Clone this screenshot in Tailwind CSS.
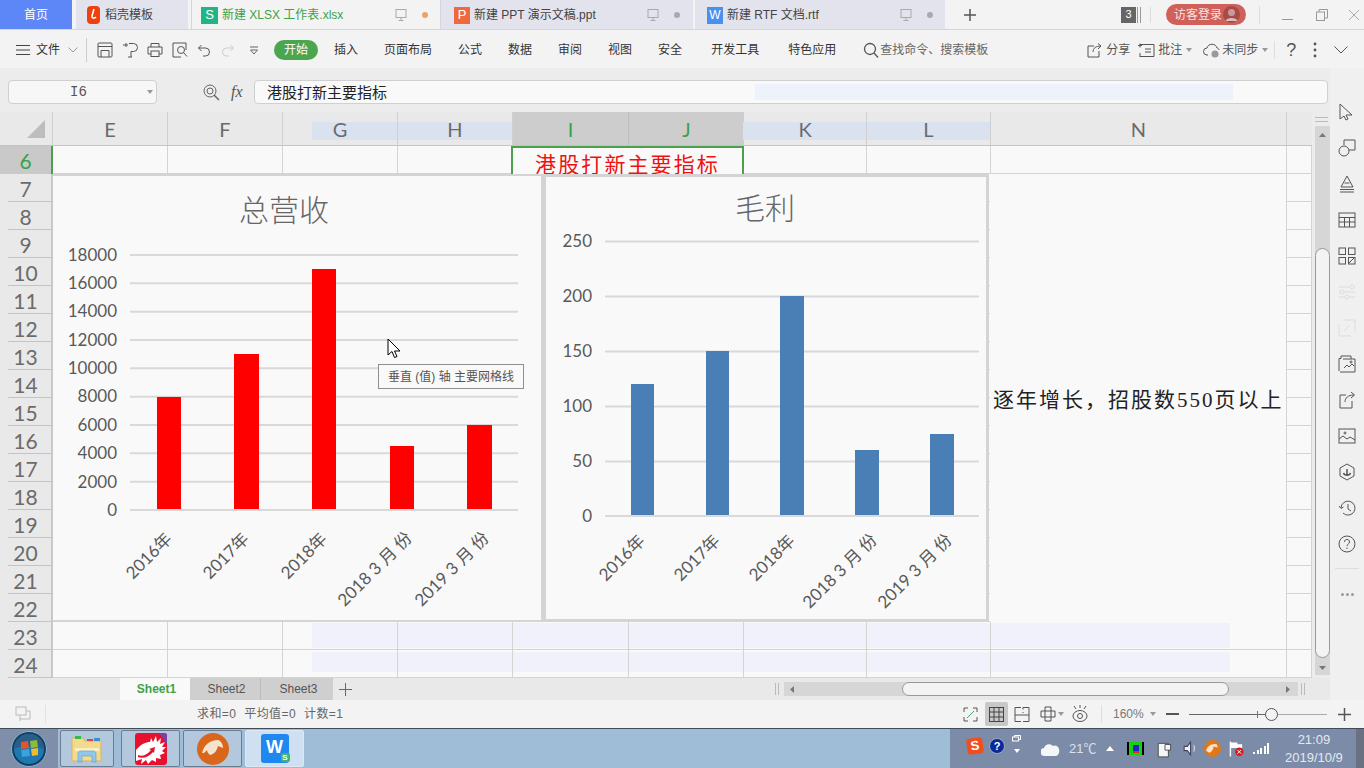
<!DOCTYPE html>
<html lang="en">
<head>
  <meta charset="UTF-8">
  <title>新建 XLSX 工作表.xlsx</title>
  <script src="https://cdn.jsdelivr.net/npm/@tailwindcss/browser@4"></script>
</head>
<body class="w-[1364px] h-[768px] overflow-hidden flex flex-col bg-[#f3f3f3] text-[#444] text-[12px] font-['Liberation_Sans','Noto_Sans_CJK_SC',sans-serif]">

  <!-- title tabs -->
  <header class="h-[30px] flex items-stretch shrink-0 border-b border-[#d5d5e0]">
    <div class="w-[72px] bg-[#5d86f6] text-white flex items-center justify-center pt-[1px]">首页</div>
    <div class="ml-[4px] w-[112px] bg-[#e2e3ec] flex items-center pt-[1px]">
      <svg class="ml-[11px]" width="13" height="18" viewBox="0 0 13 18"><rect width="13" height="18" rx="4" fill="#f0400f"/><path d="M7 3 5 10c-.5 2 2 3 4 1" fill="none" stroke="#fff" stroke-width="1.6"/></svg>
      <span class="ml-[5px]">稻壳模板</span>
    </div>
    <div class="ml-[3px] w-[250px] bg-[#f3f3f3] border-x border-[#d5d5e0] flex items-center pt-[1px] text-[#3ba24a]">
      <div class="ml-[9px] w-[17px] h-[17px] bg-[#1fb585] text-white flex items-center justify-center text-[13px]">S</div>
      <span class="ml-[4px]">新建 XLSX 工作表.xlsx</span>
      <svg class="ml-auto" width="14" height="14" viewBox="0 0 14 14" fill="none" stroke="#aaa"><rect x="2" y="1.5" width="10" height="8"/><path d="M7 9.5v3M4.500 12.500h5"/></svg>
      <span class="ml-[14px] mr-[12px] w-[6px] h-[6px] rounded-full bg-[#e8a468]"></span>
    </div>
    <div class="w-[252px] bg-[#e2e3ec] flex items-center pt-[1px]">
      <div class="ml-[13px] w-[16px] h-[17px] bg-[#ee6a3c] text-white flex items-center justify-center text-[13px]">P</div>
      <span class="ml-[4px]">新建 PPT 演示文稿.ppt</span>
      <svg class="ml-auto" width="14" height="14" viewBox="0 0 14 14" fill="none" stroke="#aaa"><rect x="2" y="1.5" width="10" height="8"/><path d="M7 9.5v3M4.500 12.500h5"/></svg>
      <span class="ml-[14px] mr-[13px] w-[6px] h-[6px] rounded-full bg-[#aaa]"></span>
    </div>
    <div class="ml-[2px] w-[250px] bg-[#e2e3ec] flex items-center pt-[1px]">
      <div class="ml-[12px] w-[16px] h-[17px] bg-[#4a90ee] text-white flex items-center justify-center text-[12px]">W</div>
      <span class="ml-[4px]">新建 RTF 文档.rtf</span>
      <svg class="ml-auto" width="14" height="14" viewBox="0 0 14 14" fill="none" stroke="#aaa"><rect x="2" y="1.5" width="10" height="8"/><path d="M7 9.5v3M4.500 12.500h5"/></svg>
      <span class="ml-[14px] mr-[12px] w-[6px] h-[6px] rounded-full bg-[#aaa]"></span>
    </div>
    <svg class="ml-[19px] self-center" width="12" height="12" viewBox="0 0 12 12" stroke="#555" stroke-width="1.500"><path d="M6 0v12M0 6h12"/></svg>
    <div class="ml-[145px] self-center w-[15px] h-[16px] bg-[#666] text-white text-[11px] flex items-center justify-center">3</div>
    <div class="ml-[1px] self-center w-[4px] h-[16px] border-x border-[#999]"></div>
    <div class="ml-[9px] self-center w-px h-[16px] bg-[#ddd]"></div>
    <div class="ml-[15px] self-center w-[80px] h-[21px] rounded-full bg-[#d0605a] text-[#f6e3e1] flex items-center pl-[8px]">
      访客登录
      <svg class="ml-[1px]" width="17" height="17" viewBox="0 0 17 17"><circle cx="8.500" cy="8.500" r="8.500" fill="#a84a4a"/><circle cx="8.500" cy="6.500" r="3.500" fill="#c99"/><path d="M2.500 15c1-4 11-4 12 0z" fill="#dbb"/></svg>
    </div>
    <div class="ml-[13px] self-center w-px h-[18px] bg-[#ddd]"></div>
    <svg class="ml-[22px] self-center" width="12" height="12" viewBox="0 0 12 12" stroke="#999"><path d="M0 10.500h11"/></svg>
    <svg class="ml-[22px] self-center" width="12" height="12" viewBox="0 0 12 12" fill="none" stroke="#999"><rect x=".5" y="3" width="8" height="8.500"/><path d="M3 3V.5h8.500V9H8.500"/></svg>
    <svg class="ml-[20px] self-center" width="12" height="12" viewBox="0 0 12 12" stroke="#aaa"><path d="m1 1 10 10M11 1 1 11"/></svg>
  </header>

  <!-- ribbon tabs -->
  <nav class="h-[38px] shrink-0 flex items-center pt-[2px] text-[#333]">
    <svg class="ml-[16px]" width="14" height="12" viewBox="0 0 14 12" stroke="#444"><path d="M0 1.500h14M0 6h14M0 10.500h14"/></svg>
    <span class="ml-[6px]">文件</span>
    <svg class="ml-[8px]" width="10" height="6" viewBox="0 0 10 6" fill="none" stroke="#999"><path d="m.5.500 4.500 4.500L9.500.500"/></svg>
    <div class="ml-[8px] w-px h-[24px] bg-[#ccc]"></div>
    <svg class="ml-[10px]" width="16" height="16" viewBox="0 0 16 16" fill="none" stroke="#555"><rect x="1" y="1" width="14" height="14" rx="1"/><path d="M1 4.500h14M4 15V8.500h8V15"/></svg>
    <svg class="ml-[10px]" width="16" height="16" viewBox="0 0 16 16" fill="none" stroke="#555"><path d="M0 3h5M3 1v4M6 1.500h4.500a4 4 0 0 1 0 8H8v5.500M5 15h4"/></svg>
    <svg class="ml-[8px]" width="16" height="16" viewBox="0 0 16 16" fill="none" stroke="#555"><path d="M4 5V1.500h8V5M4 12H1V5h14v7h-3"/><rect x="4" y="9" width="8" height="5.500"/></svg>
    <svg class="ml-[9px]" width="16" height="16" viewBox="0 0 16 16" fill="none" stroke="#555"><path d="M14 8V1H1v14h8"/><circle cx="9" cy="8" r="3.500"/><path d="m11.500 10.500 3.500 4"/></svg>
    <svg class="ml-[10px]" width="12" height="13" viewBox="0 0 12 13" fill="none" stroke="#555"><path d="M.5 4h7a4 4 0 0 1 0 8H5M3.500 1 .5 4l3 3"/></svg>
    <svg class="ml-[12px]" width="12" height="13" viewBox="0 0 12 13" fill="none" stroke="#ccc"><path d="M11.500 4h-7a4 4 0 0 0 0 8H7M8.500 1l3 3-3 3"/></svg>
    <svg class="ml-[15px]" width="10" height="9" viewBox="0 0 10 9" fill="none" stroke="#666"><path d="M1 1h8M1.500 4l3.500 4 3.500-4z"/></svg>
    <div class="ml-[15px] w-[44px] h-[20px] rounded-full bg-[#4ca64f] text-white flex items-center justify-center">开始</div>
    <span class="ml-[16px]">插入</span>
    <span class="ml-[26px]">页面布局</span>
    <span class="ml-[26px]">公式</span>
    <span class="ml-[26px]">数据</span>
    <span class="ml-[26px]">审阅</span>
    <span class="ml-[26px]">视图</span>
    <span class="ml-[26px]">安全</span>
    <span class="ml-[29px]">开发工具</span>
    <span class="ml-[29px]">特色应用</span>
    <svg class="ml-[27px]" width="16" height="16" viewBox="0 0 16 16" fill="none" stroke="#555" stroke-width="1.300"><circle cx="7" cy="7" r="5.500"/><path d="m11 11 4 4.500"/></svg>
    <span class="ml-[1px] text-[#666]">查找命令、搜索模板</span>
    <svg class="ml-[99px]" width="15" height="15" viewBox="0 0 15 15" fill="none" stroke="#555"><path d="M7 3H1v11h11V8M6 9c0-4 3-6 8-6M11 .5 14 3l-3 3"/></svg>
    <span class="ml-[4px] text-[#555]">分享</span>
    <svg class="ml-[7px]" width="18" height="15" viewBox="0 0 18 15" fill="none" stroke="#555"><path d="M3 1.500h14v12H3M3 .5v4M1 2.500h4M3 10v4M8 6h6M8 9h6"/></svg>
    <span class="ml-[3px] text-[#555]">批注</span>
    <svg class="ml-[4px]" width="6" height="4" viewBox="0 0 6 4" fill="#999"><path d="M0 0h6L3 4z"/></svg>
    <svg class="ml-[11px]" width="18" height="15" viewBox="0 0 18 15" fill="none" stroke="#555"><path d="M5 12H4A3.500 3.500 0 0 1 4 5c1-5 9-5 10 0 1 0 2 1 2 2"/><circle cx="12" cy="11" r="3.500" fill="#999" stroke="none"/></svg>
    <span class="ml-[1px] text-[#555]">未同步</span>
    <svg class="ml-[4px]" width="6" height="4" viewBox="0 0 6 4" fill="#999"><path d="M0 0h6L3 4z"/></svg>
    <div class="ml-[6px] w-px h-[18px] bg-[#ddd]"></div>
    <span class="ml-[11px] text-[18px] text-[#555] leading-none">?</span>
    <svg class="ml-[17px]" width="4" height="16" viewBox="0 0 4 16" fill="#555"><circle cx="2" cy="2" r="1.400"/><circle cx="2" cy="8" r="1.400"/><circle cx="2" cy="14" r="1.400"/></svg>
    <svg class="ml-[17px]" width="14" height="8" viewBox="0 0 14 8" fill="none" stroke="#555"><path d="m.5.500 6.500 6.500L13.500.500"/></svg>
  </nav>

  <div class="flex h-[632px] shrink-0">
    <div class="w-[1330px] flex flex-col">
      <!-- formula bar -->
      <div class="h-[44px] bg-[#ececec] flex items-center pl-[8px] pt-[4px]">
        <div class="relative w-[149px] h-[24px] bg-[#f7f7f7] border border-[#d0d0d0] rounded-[4px] flex items-center justify-center pr-[8px] text-[14px] font-['Liberation_Mono',monospace] text-[#555]">
          I6
          <svg class="absolute right-[3px] top-[9px]" width="6" height="4" viewBox="0 0 6 4" fill="#999"><path d="M0 0h6L3 4z"/></svg>
        </div>
        <svg class="ml-[46px]" width="17" height="17" viewBox="0 0 17 17" fill="none" stroke="#666"><circle cx="7" cy="7" r="6"/><circle cx="7" cy="7" r="3"/><path d="m11 11 5 5" stroke-width="1.500"/></svg>
        <span class="ml-[11px] w-[16px] text-[16px] italic text-[#555] font-['Liberation_Serif',serif]">fx</span>
        <div class="relative ml-[7px] w-[1074px] h-[24px] bg-[#f9f9f9] border border-[#d0d0d0] rounded-[4px] flex items-center pl-[12px] text-[15px] text-[#222] font-['Noto_Sans_CJK_SC',sans-serif]">
          港股打新主要指标
          <div class="absolute left-[500px] top-[3px] w-[478px] h-[16px] bg-[#eef3fb]"></div>
        </div>
      </div>

      <div class="flex flex-1 min-h-0">
        <!-- sheet -->
        <div class="relative w-[1312px] h-[566px] bg-[#f9f9f9]">
          <div class="grid grid-cols-[53px_115px_115px_115px_115px_116px_115px_123px_124px_296px_25px] h-[34px] bg-[#e9e9e9] border-b border-[#c4c4c4] text-[20px] text-[#6b6b6b] font-['Lato',sans-serif] relative">
            <div class="absolute left-[312px] top-[10px] w-[200px] h-[18px] bg-[#dbe2ef]"></div>
            <div class="absolute left-[743px] top-[10px] w-[247px] h-[18px] bg-[#dbe2ef]"></div>
            <div class="border-r border-[#d0d0d0] flex items-center justify-end pr-[7px]">
              <svg width="18" height="18" viewBox="0 0 18 18" fill="#bdbdbd"><path d="M18 0v18H0z"/></svg>
            </div>
            <div class="border-r border-[#d0d0d0] flex items-center justify-center">E</div>
            <div class="border-r border-[#d0d0d0] flex items-center justify-center">F</div>
            <div class="relative border-r border-[#d0d0d0] flex items-center justify-center">G</div>
            <div class="relative border-r border-[#d0d0d0] flex items-center justify-center">H</div>
            <div class="border-r border-[#bdbdbd] bg-[#cdcdcd] text-[#3ba24a] flex items-center justify-center">I</div>
            <div class="bg-[#cdcdcd] text-[#3ba24a] flex items-center justify-center">J</div>
            <div class="relative border-r border-[#d0d0d0] flex items-center justify-center">K</div>
            <div class="relative border-r border-[#d0d0d0] flex items-center justify-center">L</div>
            <div class="border-r border-[#d0d0d0] flex items-center justify-center">N</div>
            <div></div>
          </div>

          <!-- leftover pale areas in rows 23 and 24 -->
          <div class="absolute left-[312px] top-[511px] w-[918px] h-[25px] bg-[#f0f1fa]"></div>
          <div class="absolute left-[312px] top-[540px] w-[918px] h-[20px] bg-[#f0f1fa]"></div>

          <div id="rows" class="relative font-['Lato',sans-serif]"></div>

          <!-- selected cell -->
          <div class="absolute left-[511px] top-[34px] w-[233px] h-[36px] border-2 border-[#4ba14b] bg-[#f9f9f9] flex items-start justify-center pt-[5px] leading-none text-[21px] tracking-[2.100px] text-[#f01010] font-['Noto_Sans_CJK_SC',sans-serif]">港股打新主要指标</div>

          <!-- merged N cell -->
          <div class="absolute left-[990px] top-[62px] w-[296px] h-[448px] bg-[#f9f9f9] flex items-center pl-[3px] text-[21px] tracking-[2px] text-[#222] whitespace-nowrap font-['Liberation_Serif','Noto_Sans_CJK_SC',serif]">
            <span class="mt-[6px]">逐年增长，招股数550页以上</span>
          </div>

          <!-- chart one -->
          <svg class="absolute left-[53px] top-[62px] bg-[#f9f9f9]" width="488" height="448" viewBox="53 174 488 448">
            <path d="M53 175h488M53 621h488" stroke="#d4d4d4" stroke-width="2"/>
            <text x="284" y="221" text-anchor="middle" font-size="30" font-weight="300" fill="#666" font-family="Noto Sans CJK SC">总营收</text>
            <g stroke="#d9d9d9" stroke-width="2">
              <path d="M130 255h388M130 283.300h388M130 311.700h388M130 340h388M130 368.300h388M130 396.700h388M130 425h388M130 453.300h388M130 481.700h388M130 510h388"/>
            </g>
            <g fill="#ff0000">
              <rect x="157" y="397" width="24" height="112"/>
              <rect x="234" y="354" width="25" height="155"/>
              <rect x="312" y="269" width="24" height="240"/>
              <rect x="390" y="446" width="24" height="63"/>
              <rect x="467" y="425" width="25" height="84"/>
            </g>
            <g font-family="Lato" font-size="17" fill="#595959" text-anchor="end">
              <text x="117" y="261">18000</text><text x="117" y="289">16000</text><text x="117" y="317">14000</text>
              <text x="117" y="346">12000</text><text x="117" y="374">10000</text><text x="117" y="402">8000</text>
              <text x="117" y="431">6000</text><text x="117" y="459">4000</text><text x="117" y="488">2000</text>
              <text x="117" y="516">0</text>
            </g>
            <g font-family="Lato,Noto Sans CJK SC" font-size="17" fill="#595959" text-anchor="end">
              <text transform="rotate(-45 173 540)" x="173" y="540">2016年</text>
              <text transform="rotate(-45 250 540)" x="250" y="540">2017年</text>
              <text transform="rotate(-45 328 540)" x="328" y="540">2018年</text>
              <text transform="rotate(-45 413 539)" x="413" y="539" xml:space="preserve">2018 3 月 份</text>
              <text transform="rotate(-45 490 539)" x="490" y="539" xml:space="preserve">2019 3 月 份</text>
            </g>
          </svg>

          <div class="absolute left-[541px] top-[62px] w-[2px] h-[448px] bg-[#d4d4d4]"></div>

          <!-- chart two -->
          <svg class="absolute left-[543px] top-[62px] bg-[#f9f9f9] border-[3px] border-[#d4d4d4]" width="446" height="448" viewBox="546 177 440 442">
            <text x="765" y="219" text-anchor="middle" font-size="30" font-weight="300" fill="#666" font-family="Noto Sans CJK SC">毛利</text>
            <g stroke="#d9d9d9" stroke-width="2">
              <path d="M605 241.500h374M605 296.500h374M605 351.500h374M605 406.500h374M605 461.500h374M605 516h374"/>
            </g>
            <g fill="#4a7fb5">
              <rect x="631" y="384" width="23" height="131"/>
              <rect x="706" y="351" width="23" height="164"/>
              <rect x="780" y="296" width="24" height="219"/>
              <rect x="855" y="450" width="24" height="65"/>
              <rect x="930" y="434" width="24" height="81"/>
            </g>
            <g font-family="Lato" font-size="17" fill="#595959" text-anchor="end">
              <text x="592" y="247">250</text><text x="592" y="302">200</text><text x="592" y="357">150</text>
              <text x="592" y="412">100</text><text x="592" y="467">50</text><text x="592" y="522">0</text>
            </g>
            <g font-family="Lato,Noto Sans CJK SC" font-size="17" fill="#595959" text-anchor="end">
              <text transform="rotate(-45 646 542)" x="646" y="542">2016年</text>
              <text transform="rotate(-45 721 542)" x="721" y="542">2017年</text>
              <text transform="rotate(-45 796 542)" x="796" y="542">2018年</text>
              <text transform="rotate(-45 878 541)" x="878" y="541" xml:space="preserve">2018 3 月 份</text>
              <text transform="rotate(-45 953 541)" x="953" y="541" xml:space="preserve">2019 3 月 份</text>
            </g>
          </svg>

          <!-- tooltip and pointer -->
          <div class="absolute left-[378px] top-[252px] w-[146px] h-[25px] bg-[#f9f9f9] border border-[#8f8f8f] flex items-center justify-center text-[12px] text-[#555]">垂直 (值) 轴 主要网格线</div>
          <svg class="absolute left-[387px] top-[226px]" width="14" height="22" viewBox="0 0 14 22"><path d="M1 1v16l4-3.500 2.500 6 2.500-1-2.500-5.500H13z" fill="#fff" stroke="#000"/></svg>
        </div>

        <!-- vertical scrollbar -->
        <div class="w-[18px] pl-[3px] flex flex-col bg-[#ececec]">
          <div class="h-[14px] flex flex-col justify-center gap-[3px] pr-[2px]">
            <div class="h-px bg-[#bbb]"></div><div class="h-px bg-[#bbb]"></div>
          </div>
          <div class="h-[549px] bg-[#d6d6d6] flex flex-col items-center">
            <svg class="mt-[7px]" width="7" height="4" viewBox="0 0 7 4" fill="#777"><path d="M3.500 0 7 4H0z"/></svg>
            <div class="mt-[111px] w-full h-[410px] bg-[#f3f3f3] border border-[#999] rounded-[8px]"></div>
            <svg class="mt-[8px]" width="7" height="4" viewBox="0 0 7 4" fill="#777"><path d="M0 0h7L3.500 4z"/></svg>
          </div>
        </div>
      </div>

      <!-- sheet tabs -->
      <div class="h-[22px] bg-[#e9e9e9] flex items-stretch text-[#555]">
        <div class="ml-[120px] w-[70px] pl-[3px] bg-[#f9f9f9] text-[#3ba24a] font-bold flex items-center justify-center">Sheet1</div>
        <div class="w-[71px] pl-[3px] bg-[#cfcfcf] border-r border-[#bbb] flex items-center justify-center">Sheet2</div>
        <div class="w-[72px] pl-[3px] bg-[#cfcfcf] flex items-center justify-center">Sheet3</div>
        <svg class="ml-[6px] self-center" width="13" height="13" viewBox="0 0 13 13" stroke="#666"><path d="M6.500 0v13M0 6.500h13"/></svg>
        <div class="ml-[423px] self-center w-[4px] h-[12px] border-x border-[#bbb]"></div>
        <div class="ml-[5px] self-center w-[514px] h-[14px] bg-[#d6d6d6] flex items-center relative">
          <svg class="ml-[6px]" width="4" height="7" viewBox="0 0 4 7" fill="#777"><path d="M4 0v7L0 3.500z"/></svg>
          <div class="ml-[108px] w-[327px] h-full bg-[#f3f3f3] border border-[#999] rounded-[7px]"></div>
          <svg class="ml-[57px]" width="4" height="7" viewBox="0 0 4 7" fill="#777"><path d="M0 0v7l4-3.500z"/></svg>
        </div>
        <div class="ml-[3px] self-center w-[4px] h-[12px] border-x border-[#bbb]"></div>
      </div>
    </div>

    <!-- side panel -->
    <aside class="w-[34px] pt-[26px] bg-[#f0f0f0] flex flex-col items-center">
      <div class="h-[36px] flex items-center"><svg width="18" height="18" viewBox="0 0 18 18" fill="none" stroke="#555"><path d="M2 1v15l4-3 2 4 2-1-2-4h6z"/></svg></div>
      <div class="h-[36px] flex items-center"><svg width="18" height="18" viewBox="0 0 18 18" fill="none" stroke="#555"><path d="M6 6V1h11v10h-6"/><circle cx="6" cy="12" r="5"/></svg></div>
      <div class="h-[36px] flex items-center"><svg width="18" height="18" viewBox="0 0 18 18" fill="none" stroke="#555"><path d="m3 12 6-11 6 11zM6.500 8h5M2 14.500h14M2 17h14"/></svg></div>
      <div class="h-[36px] flex items-center"><svg width="18" height="16" viewBox="0 0 18 16" fill="none" stroke="#555"><rect x="1" y="1" width="16" height="14"/><path d="M1 5.500h16M1 10h16M6.500 5.500V15M11.500 5.500V15"/></svg></div>
      <div class="h-[36px] flex items-center"><svg width="18" height="18" viewBox="0 0 18 18" fill="none" stroke="#555"><rect x="1" y="1" width="6.500" height="6.500"/><rect x="10.500" y="1" width="6.500" height="6.500"/><rect x="1" y="10.500" width="6.500" height="6.500"/><rect x="10.500" y="10.500" width="6.500" height="6.500"/><path d="m11 16 5-5"/></svg></div>
      <div class="h-[36px] flex items-center"><svg width="18" height="16" viewBox="0 0 18 16" fill="none" stroke="#ddd"><path d="M1 3h11M16 3h1M1 8h1M6 8h11M1 13h6M11 13h6"/><circle cx="14" cy="3" r="2"/><circle cx="4" cy="8" r="2"/><circle cx="9" cy="13" r="2"/></svg></div>
      <div class="h-[36px] flex items-center"><svg width="18" height="18" viewBox="0 0 18 18" fill="none" stroke="#ddd"><path d="M5 1h12v12M1 5v12h12M6 12l6-6"/></svg></div>
      <div class="h-[36px] flex items-center"><svg width="18" height="18" viewBox="0 0 18 18" fill="none" stroke="#555"><path d="M1 16V3.500h2V1h10v3M5 4h12v13H2"/><path d="m6 13 3-3 2 2 3-3 2 2"/><circle cx="13" cy="7" r="1"/></svg></div>
      <div class="h-[36px] flex items-center"><svg width="18" height="18" viewBox="0 0 18 18" fill="none" stroke="#555"><path d="M8 4H2v13h12v-7M7 11c0-4 3-7 9-7M13 1l3.500 3-3.500 3"/></svg></div>
      <div class="h-[36px] flex items-center"><svg width="18" height="16" viewBox="0 0 18 16" fill="none" stroke="#555"><rect x="1" y="1" width="16" height="14"/><path d="m1 11 4-3 4 3 3-2 5 3"/><circle cx="7" cy="5" r="1"/></svg></div>
      <div class="h-[36px] flex items-center"><svg width="16" height="18" viewBox="0 0 16 18" fill="none" stroke="#555"><path d="m8 1 7 4v8l-7 4-7-4V5z"/><path d="M4.500 10c1 3 6 3 7 0M8 12V6" stroke-width="1.500"/></svg></div>
      <div class="h-[36px] flex items-center"><svg width="18" height="18" viewBox="0 0 18 18" fill="none" stroke="#555"><path d="M3 9a7 7 0 1 1 2 5M1 7l2 2.500L5.500 8M10 5v5l3 2"/></svg></div>
      <div class="h-[36px] flex items-center"><svg width="18" height="18" viewBox="0 0 18 18" fill="none" stroke="#555"><circle cx="9" cy="9" r="8"/><path d="M6.500 7c0-3.500 5-3.500 5 0 0 2-2.500 2-2.500 4M9 12.500v1.500"/></svg></div>
      <div class="mt-[6px] w-[24px] h-px bg-[#ddd]"></div>
      <div class="mt-[24px] flex gap-[2px]"><span class="w-[3px] h-[3px] rounded-full bg-[#999]"></span><span class="w-[3px] h-[3px] rounded-full bg-[#999]"></span><span class="w-[3px] h-[3px] rounded-full bg-[#999]"></span></div>
    </aside>
  </div>

  <!-- status bar -->
  <footer class="h-[28px] shrink-0 flex items-center bg-[#f3f3f3] text-[#555]">
    <svg class="ml-[15px]" width="16" height="16" viewBox="0 0 16 16" fill="none" stroke="#bbb"><rect x="1" y="1" width="10" height="8"/><path d="M11 5h4v8H5v2M5 9v4"/></svg>
    <div class="ml-[14px] w-px h-[18px] bg-[#e2e2e2]"></div>
    <div class="ml-[151px] w-[148px] flex gap-[8px] tracking-[0.400px] whitespace-nowrap text-[#666]"><span>求和=0</span><span>平均值=0</span><span>计数=1</span></div>
    <svg class="ml-[618px]" width="15" height="15" viewBox="0 0 15 15" fill="none" stroke="#555"><path d="M1 5V1h4M10 1h4v4M5 14H1v-4M14 10v4h-4"/><path d="m4 11 7-7" stroke="#4ba36b"/></svg>
    <div class="ml-[7px] w-[23px] h-[24px] rounded-[2px] bg-[#c8c8c8] flex items-center justify-center">
      <svg width="15" height="15" viewBox="0 0 15 15" fill="none" stroke="#444"><rect x=".5" y=".5" width="14" height="14"/><path d="M5 0v15M10 0v15M0 5h15M0 10h15"/></svg>
    </div>
    <svg class="ml-[6px]" width="16" height="15" viewBox="0 0 16 15" fill="none" stroke="#555"><path d="M7 .5H1v14h6M9 .5h6v14H9M1 8h14M9 .5v2M9 5v1"/></svg>
    <svg class="ml-[10px]" width="16" height="16" viewBox="0 0 16 16" fill="none" stroke="#555"><path d="M5 5V1h6v14H5zM1 5h14v6H1z"/></svg>
    <svg class="ml-[2px]" width="6" height="4" viewBox="0 0 6 4" fill="#999"><path d="M0 0h6L3 4z"/></svg>
    <svg class="ml-[8px]" width="16" height="18" viewBox="0 0 16 18" fill="none" stroke="#555"><ellipse cx="8" cy="11" rx="7" ry="5.500"/><circle cx="8" cy="11" r="2.500"/><path d="M2 1l2 3M14 1l-2 3M8 0v3"/></svg>
    <div class="ml-[13px] w-px h-[18px] bg-[#ddd]"></div>
    <span class="ml-[11px] w-[32px] text-[#777]">160%</span>
    <svg class="ml-[5px]" width="6" height="4" viewBox="0 0 6 4" fill="#999"><path d="M0 0h6L3 4z"/></svg>
    <div class="ml-[10px] w-[13px] h-[2px] bg-[#555]"></div>
    <div class="ml-[10px] w-[138px] h-px bg-[#aaa] relative">
      <div class="absolute left-0 top-0 w-[82px] h-px bg-[#666]"></div>
      <div class="absolute left-[68px] -top-[3px] w-px h-[7px] bg-[#777]"></div>
      <div class="absolute left-[76px] -top-[6px] w-[13px] h-[13px] rounded-full bg-[#f3f3f3] border border-[#555]"></div>
    </div>
    <svg class="ml-[11px]" width="13" height="13" viewBox="0 0 13 13" stroke="#555" stroke-width="1.500"><path d="M6.500 0v13M0 6.500h13"/></svg>
  </footer>

  <!-- windows taskbar -->
  <div class="h-[40px] shrink-0 flex items-stretch border-t border-[#3f4a5a] bg-[#9fbdd6]">
    <div class="w-[58px] bg-[#7f8fa9] flex items-center justify-center">
      <svg width="36" height="36" viewBox="0 0 36 36">
        <circle cx="18" cy="18" r="17.500" fill="#123f66" stroke="#8fb4cc"/>
        <circle cx="18" cy="18" r="15" fill="#1f78b0"/>
        <path d="M3 18a15 15 0 0 1 30 0c-8-4-22-4-30 0z" fill="#2a5e86"/>
        <path d="m10 11 7 -1 1 7-8 1z" fill="#e2552c"/>
        <path d="m19 10 7-1 1 7-7 1z" fill="#8cbd3a"/>
        <path d="m10 19 8-1 1 7-8 1z" fill="#3aa2dc"/>
        <path d="m20 18 7-1 0 7-6 1z" fill="#f2b92a"/>
      </svg>
    </div>
    <div class="ml-[2px] w-[54px] my-[1px] rounded-[2px] border border-[#6c7d90] bg-[#b3c8dc] flex items-center justify-center">
      <svg width="32" height="28" viewBox="0 0 32 28">
        <path d="M1 3h11l2 3h16v20H1z" fill="#f2da8e" stroke="#d2b766"/>
        <rect x="4" y="1" width="6" height="3" fill="#3cb64a"/><rect x="16" y="4" width="6" height="2" fill="#d94a3a"/><rect x="23" y="3" width="6" height="3" fill="#3a8fd9"/>
        <path d="M4 13h24v3H4z" fill="#fbefc0"/>
        <path d="M7 27v-8c0-2 1-3 3-3h12c2 0 3 1 3 3v8h-4v-6H11v6z" fill="#8fc8ec" stroke="#5a9cc8" stroke-width=".6"/>
      </svg>
    </div>
    <div class="ml-[7px] w-[59px] my-[1px] rounded-[2px] border border-[#6c7d90] bg-[#b3c8dc] flex items-center justify-center">
      <svg width="32" height="32" viewBox="0 0 32 32">
        <rect width="32" height="32" rx="3" fill="#e8112d"/>
        <path d="M24 0h5q3 0 3 3v8z" fill="#7b3fa6"/>
        <path d="M1 17c5-6 10-8 14-8l1-4 2 4 3-6 1 6 4-4-1 6 5-2-3 5 4 0-4 4 3 2-5 2 1 4-5-1 0 4-4-2-4 4-2-4-5 4 1-5-6 2z" fill="#fff"/>
        <path d="M3 22c4 2 9 0 13-5l-2-1 6-2-1 6-1-1c-4 5-10 7-15 5z" fill="#e8112d"/>
      </svg>
    </div>
    <div class="ml-[3px] w-[59px] my-[1px] rounded-[2px] border border-[#6c7d90] bg-[#b3c8dc] flex items-center justify-center">
      <svg width="32" height="32" viewBox="0 0 32 32">
        <circle cx="16" cy="16" r="16" fill="#d9661a"/>
        <path d="M5 20c2-8 8-13 16-13 3 1 5 4 5 8l-5-2c-1 4-3 8-8 9-2-2-3-3-3-5l-3 3z" fill="#f5e3cd"/>
      </svg>
    </div>
    <div class="ml-[3px] w-[59px] my-[1px] rounded-[2px] border border-[#dfe8f2] bg-[#cfe0f2] flex items-center justify-center">
      <div class="relative w-[28px] h-[29px] rounded-[3px] bg-[#1e87f0] text-white font-bold text-[18px] flex items-center justify-center pb-[3px]">W
        <span class="absolute right-[-1px] bottom-[1px] w-[9px] h-[9px] rounded-[2px] bg-[#45b36b] text-[8px] leading-[9px] text-center">S</span>
      </div>
    </div>

    <!-- tray -->
    <div class="ml-auto w-[414px] bg-[#7c8ca8] flex items-center text-[#e8edf3] relative">
      <div class="ml-[17px] -mt-[6px] w-[16px] h-[16px] rounded-[3px] bg-[#f04e1c] rotate-[-8deg] text-white font-bold text-[13px] leading-[16px] text-center">S</div>
      <div class="ml-[6px] -mt-[5px] w-[16px] h-[16px] rounded-full bg-[#0a2a9a] border border-[#9ab] text-white font-bold text-[11px] leading-[14px] text-center">?</div>
      <div class="ml-[7px] -mt-[10px] flex flex-col items-center gap-[7px]">
        <svg width="9" height="7" viewBox="0 0 9 7" fill="none" stroke="#fff"><rect x=".5" y="2" width="6" height="4"/><path d="M2.500 2V.5h6v4H6.500"/></svg>
        <svg width="6" height="4" viewBox="0 0 6 4" fill="#fff"><path d="M0 0h6L3 4z"/></svg>
      </div>
      <svg class="ml-[20px]" width="20" height="16" viewBox="0 0 20 16" fill="#f4f6f8"><path d="M4 15a4 4 0 0 1-1-8c1-4 6-5 9-2 1-1 5-1 6 3s-1 7-3 7z"/></svg>
      <span class="ml-[8px] w-[27px] text-[13px] text-[#d9e0e8]">21℃</span>
      <svg class="ml-[10px]" width="8" height="5" viewBox="0 0 8 5" fill="#fff"><path d="M4 0l4 5H0z"/></svg>
      <div class="ml-[13px] w-[17px] h-[13px] bg-[#12d212] flex items-center justify-center border-x-2 border-black">
        <span class="w-[6px] h-[8px] bg-[#2222cc] border-b-2 border-[#ee2222]"></span>
      </div>
      <svg class="ml-[13px]" width="16" height="18" viewBox="0 0 14 16" fill="#f4f6f8" stroke="#333" stroke-width=".7"><path d="M1 3h9v12H1z"/><path d="M7 4h5v5H7z"/></svg>
      <svg class="ml-[10px]" width="13" height="15" viewBox="0 0 12 14" fill="#eef" stroke="#445"><path d="M1 5h3l3-4v12L4 9H1z"/><path d="M10 4c1 2 1 4 0 6" fill="none" stroke="#dde"/></svg>
      <svg class="ml-[8px]" width="17" height="17" viewBox="0 0 16 16"><circle cx="8" cy="8" r="8" fill="#e07818"/><path d="M2 10c1-4 5-7 10-6l1 3-4-1c0 3-2 5-4 6z" fill="#f5e3cd"/></svg>
      <svg class="ml-[8px]" width="15" height="16" viewBox="0 0 16 16"><path d="M1.500 0v16" stroke="#fff" stroke-width="1.500"/><path d="M2 1h7v2h5v4H2z" fill="#fff"/><circle cx="11" cy="11" r="4.500" fill="#e01818"/><path d="m9 9 4 4M13 9l-4 4" stroke="#fff"/></svg>
      <div class="ml-[9px] flex items-end gap-[1.500px] h-[11px]">
        <span class="w-[2px] h-[2px] bg-white"></span><span class="w-[2px] h-[4px] bg-white"></span><span class="w-[2px] h-[6px] bg-white"></span><span class="w-[2px] h-[8px] bg-white"></span><span class="w-[2px] h-[11px] bg-white"></span>
      </div>
      <div class="ml-[16px] flex flex-col items-center leading-[18px] text-[13px] text-[#e4e9ef]">
        <span>21:09</span>
        <span>2019/10/9</span>
      </div>
      <div class="absolute right-0 top-0 w-[8px] h-full bg-[#6a7180]"></div>
    </div>
  </div>

  <script>
    // spreadsheet rows 6 to 24
    let html = '';
    for (let r = 6; r <= 24; r++) {
      const head = r === 6
        ? '<div class="bg-[#c9c9c9] border-r-2 border-[#4ba14b] text-[#3ba24a] flex items-center justify-center text-[21px] leading-none">' + r + '</div>'
        : '<div class="bg-[#e9e9e9] border-r-2 border-[#c8c8c8] relative flex items-center justify-center text-[21px] leading-none text-[#6b6b6b]">' + r + '<span class="absolute left-[8px] right-0 bottom-0 h-px bg-[#c4c4c4]"></span></div>';
      let cells = '';
      for (let c = 0; c < 10; c++) {
        cells += '<div class="border-r border-b border-[#d4d4d4]"></div>';
      }
      html += '<div class="grid grid-cols-[53px_115px_115px_115px_115px_116px_115px_123px_124px_296px_25px] h-[28px]">' + head + cells + '</div>';
    }
    document.getElementById('rows').innerHTML = html;
  </script>
</body>
</html>
